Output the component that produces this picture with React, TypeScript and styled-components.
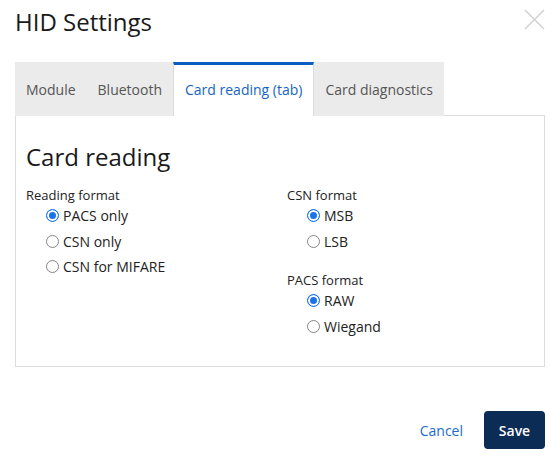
import * as React from 'react'
import { useState } from 'react'
import styled, { createGlobalStyle } from 'styled-components'

const GlobalStyle = createGlobalStyle`
  html, body {
    margin: 0;
    padding: 0;
    background: #fff;
  }
  body {
    font-family: 'Open Sans', 'Noto Sans', sans-serif;
    color: #222;
  }
`

interface Option {
  value: string
  label: string
}

interface GroupProps {
  title: string
  options: Option[]
  value: string
  onChange: (v: string) => void
}

const tabs = ['Module', 'Bluetooth', 'Card reading (tab)', 'Card diagnostics']

const RadioGroup: React.FC<GroupProps> = ({ title, options, value, onChange }) => (
  <Group>
    <GroupTitle>{title}</GroupTitle>
    {options.map((o) => (
      <RadioRow key={o.value} onClick={() => onChange(o.value)}>
        <RadioDot checked={o.value === value} />
        {o.label}
      </RadioRow>
    ))}
  </Group>
)

const App: React.FC = () => {
  const [active, setActive] = useState(2)
  const [reading, setReading] = useState('pacs')
  const [csn, setCsn] = useState('msb')
  const [pacs, setPacs] = useState('raw')

  return (
    <Dialog>
      <GlobalStyle />
      <Header>
        <Title>HID Settings</Title>
        <Close aria-label="Close">
          <svg width="21" height="21" viewBox="0 0 21 21">
            <path d="M1 1L20 20M20 1L1 20" stroke="#cfcfcf" strokeWidth="1.4" />
          </svg>
        </Close>
      </Header>
      <TabBar>
        {tabs.map((t, i) => (
          <Tab key={t} active={i === active} onClick={() => setActive(i)}>
            {t}
          </Tab>
        ))}
      </TabBar>
      <Panel>
        <PanelTitle>Card reading</PanelTitle>
        <Columns>
          <Column>
            <RadioGroup
              title="Reading format"
              value={reading}
              onChange={setReading}
              options={[
                { value: 'pacs', label: 'PACS only' },
                { value: 'csn', label: 'CSN only' },
                { value: 'mifare', label: 'CSN for MIFARE' },
              ]}
            />
          </Column>
          <Column>
            <RadioGroup
              title="CSN format"
              value={csn}
              onChange={setCsn}
              options={[
                { value: 'msb', label: 'MSB' },
                { value: 'lsb', label: 'LSB' },
              ]}
            />
            <RadioGroup
              title="PACS format"
              value={pacs}
              onChange={setPacs}
              options={[
                { value: 'raw', label: 'RAW' },
                { value: 'wiegand', label: 'Wiegand' },
              ]}
            />
          </Column>
        </Columns>
      </Panel>
      <Footer>
        <CancelButton>Cancel</CancelButton>
        <SaveButton>Save</SaveButton>
      </Footer>
    </Dialog>
  )
}

export default App

// Styles
const Dialog = styled.div`
  width: 560px;
  height: 464px;
  box-sizing: border-box;
  padding: 0 15px;
  display: flex;
  flex-direction: column;
`

const Header = styled.div`
  display: flex;
  justify-content: space-between;
  align-items: flex-start;
  height: 62px;
`

const Title = styled.h1`
  margin: 5px 0 0 0;
  font-size: 24px;
  font-weight: 400;
  line-height: 33px;
  color: #1a1a1a;
`

const Close = styled.button`
  border: none;
  background: none;
  padding: 0;
  margin: 9px 0 0 0;
  width: 21px;
  height: 21px;
  cursor: pointer;
  display: flex;
`

const TabBar = styled.div`
  display: flex;
  align-items: stretch;
  height: 54px;
  position: relative;
  z-index: 1;
  margin-bottom: -1px;
`

const Tab = styled.div<{ active?: boolean }>`
  display: flex;
  align-items: center;
  box-sizing: border-box;
  padding: 0 11px 3px 11px;
  font-size: 14px;
  color: ${(p) => (p.active ? '#1565c0' : '#555')};
  background: ${(p) => (p.active ? '#fff' : '#ebebeb')};
  border-top: 3px solid ${(p) => (p.active ? '#0d5cbf' : '#ebebeb')};
  border-left: ${(p) => (p.active ? '1px solid #dcdcdc' : 'none')};
  border-right: ${(p) => (p.active ? '1px solid #dcdcdc' : 'none')};
  cursor: pointer;
  white-space: nowrap;
`

const Panel = styled.div`
  height: 252px;
  box-sizing: border-box;
  border: 1px solid #dcdcdc;
  padding: 0 10px;
`

const PanelTitle = styled.h2`
  margin: 24px 0 15px 0;
  font-size: 24px;
  font-weight: 400;
  line-height: 33px;
  color: #1a1a1a;
`

const Columns = styled.div`
  display: grid;
  grid-template-columns: 261px 1fr;
`

const Column = styled.div`
  display: flex;
  flex-direction: column;
  gap: 19px;
`

const Group = styled.div`
  display: flex;
  flex-direction: column;
`

const GroupTitle = styled.div`
  font-size: 13px;
  line-height: 15px;
  color: #222;
`

const RadioRow = styled.label`
  display: flex;
  align-items: center;
  gap: 4px;
  padding-left: 20px;
  height: 25.5px;
  font-size: 14px;
  color: #222;
  cursor: pointer;
`

const RadioDot = styled.span<{ checked?: boolean }>`
  width: 13px;
  height: 13px;
  box-sizing: border-box;
  border-radius: 50%;
  border: 1px solid ${(p) => (p.checked ? '#1a73e8' : '#858585')};
  background: ${(p) => (p.checked ? '#1a73e8' : '#fff')};
  box-shadow: ${(p) => (p.checked ? 'inset 0 0 0 2px #fff' : 'none')};
  flex-shrink: 0;
`

const Footer = styled.div`
  display: flex;
  justify-content: flex-end;
  align-items: center;
  gap: 21px;
  margin-top: 44px;
`

const CancelButton = styled.button`
  border: none;
  background: none;
  padding: 0;
  font-family: inherit;
  font-size: 14px;
  color: #1a6ccc;
  cursor: pointer;
`

const SaveButton = styled.button`
  border: none;
  width: 61px;
  height: 38px;
  border-radius: 4px;
  background: #0b2c54;
  color: #fff;
  font-family: inherit;
  font-size: 14px;
  font-weight: 600;
  cursor: pointer;
`
